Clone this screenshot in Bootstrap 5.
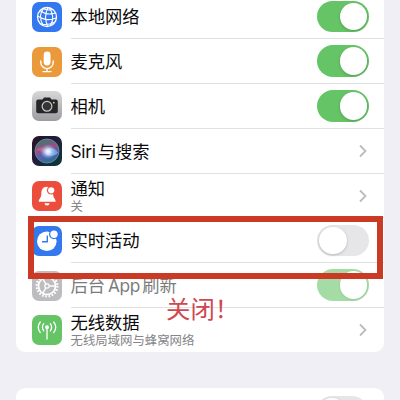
<!DOCTYPE html>
<html lang="zh-CN">
<head>
<meta charset="utf-8">
<meta name="viewport" content="width=device-width, initial-scale=1">
<title>设置</title>
<link href="https://cdn.jsdelivr.net/npm/bootstrap@5.3.0/dist/css/bootstrap.min.css" rel="stylesheet">
<style>
html, body { height: 400px; overflow: hidden; }
body { background: #f0eff5; font-family: Inter, "Noto Sans CJK SC", sans-serif; color: #0a0a0a; }
.screen { height: 400px; padding: 0 16px; }
.settings { border-radius: 9px; background: #fff; }
.settings-top { margin-top: -6px; }
.settings-next { margin-top: 36px; height: 60px; }
.item { height: 44.8px; padding: 1px 0 0 16px; background: none; border: 0; }
.tile { width: 30px; height: 30px; flex: none; margin-right: 8.5px; }
.body-line { height: 44.8px; border-bottom: 1px solid #e1e1e4; padding-right: 15px; }
.item:last-child .body-line { border-color: transparent; }
.title { font-size: 17.3px; line-height: 20px; white-space: nowrap; padding-top: 2px; }
.note { font-size: 12.4px; line-height: 14px; color: #858588; margin-top: 1px; }
.latin { letter-spacing: -.3px; margin-right: 2.2px; }
.latin-mid { margin-left: 2.8px; }
.switch { width: 52px; height: 31.5px; border-radius: 16px; background: #65c466; padding: 2px; box-sizing: border-box; }
.knob { width: 27.5px; height: 27.5px; border-radius: 50%; background: #fff; box-shadow: 0 1px 3px rgba(0,0,0,.2); }
.switch.off { background: #e6e6e8; }
.faded .tile, .faded .switch { opacity: .58; }
.faded .title { color: #7c7c7c; }
.chev { width: 10px; height: 16px; margin-right: 1.5px; }
.frame { left: 28px; top: 215.5px; width: 355px; height: 63.5px; border: 6px solid #cb3a25; }
.callout-text { left: 166px; top: 291px; font-size: 24.4px; line-height: 36px; color: #cf4850; white-space: nowrap; }
</style>
<script src="https://cdn.jsdelivr.net/npm/bootstrap@5.3.0/dist/js/bootstrap.bundle.min.js"></script>
</head>
<body>
<main class="screen position-relative overflow-hidden">
<div class="list-group settings settings-top">
  <div class="item d-flex align-items-center">
    <svg class="tile" viewBox="0 0 30 30"><rect width="30" height="30" rx="7" fill="#3478f0"/><g fill="none" stroke="#fff" stroke-width="1.1"><circle cx="15" cy="15" r="9.5" stroke-width="1.3"/><path d="M8 8.5Q15 14 23.5 11M5.7 14Q14 20 24.3 16M8 21.5Q15 24 22 20.5M12 6Q5 14 11.5 23.5M16 5.5Q11 15 16 24.5M17 5.5Q24 15 18 24M11 6.5Q16 9 20.5 7.5"/></g></svg>
    <div class="body-line flex-grow-1 d-flex justify-content-between align-items-center"><div class="title">本地网络</div><div class="switch d-flex justify-content-end"><div class="knob"></div></div></div>
  </div>
  <div class="item d-flex align-items-center">
    <svg class="tile" viewBox="0 0 30 30"><rect width="30" height="30" rx="7" fill="#ea9a3a"/><rect x="11.7" y="4.5" width="6.8" height="14" rx="3.4" fill="#fff"/><path d="M8.8 14v1.4a6.2 6.2 0 0 0 12.4 0V14M15 21.5v3M11 24.6h8" fill="none" stroke="#fff" stroke-width="1.4" stroke-linecap="round"/></svg>
    <div class="body-line flex-grow-1 d-flex justify-content-between align-items-center"><div class="title">麦克风</div><div class="switch d-flex justify-content-end"><div class="knob"></div></div></div>
  </div>
  <div class="item d-flex align-items-center">
    <svg class="tile" viewBox="0 0 30 30"><defs><linearGradient id="silver" x2="0" y2="1"><stop stop-color="#d8d8da"/><stop offset="1" stop-color="#9c9ca0"/></linearGradient></defs><rect width="30" height="30" rx="7" fill="url(#silver)"/><path d="M6.2 8.5h4.3l1.5-2.1h6l1.5 2.1h4.3q2 0 2 2v9.800q0 2-2 2H6.200q-2 0-2-2V10.500q0-2 2-2z" fill="#262628"/><circle cx="15" cy="15.300" r="4.900" fill="#343436" stroke="#c9c9cb" stroke-width="1.2"/><circle cx="21.800" cy="11.700" r=".9" fill="#e6cf4f"/></svg>
    <div class="body-line flex-grow-1 d-flex justify-content-between align-items-center"><div class="title">相机</div><div class="switch d-flex justify-content-end"><div class="knob"></div></div></div>
  </div>
  <div class="item d-flex align-items-center">
    <svg class="tile" viewBox="0 0 30 30"><defs><linearGradient id="siri-bg" y2="1"><stop stop-color="#2b1024"/><stop offset=".5" stop-color="#201f3d"/><stop offset="1" stop-color="#0d3a3c"/></linearGradient><linearGradient id="orb" x1=".3" y1="0" x2=".6" y2="1"><stop stop-color="#2a8074"/><stop offset=".4" stop-color="#9c4c7c"/><stop offset=".65" stop-color="#5a60ae"/><stop offset="1" stop-color="#2a6f92"/></linearGradient><radialGradient id="glow"><stop stop-color="#fff"/><stop offset=".35" stop-color="#d8e9ff" stop-opacity=".85"/><stop offset="1" stop-color="#72b6ff" stop-opacity="0"/></radialGradient></defs><rect width="30" height="30" rx="7" fill="url(#siri-bg)"/><circle cx="15" cy="15" r="12" fill="url(#orb)" stroke="#5f9b9d" stroke-width=".8"/><path d="M4 15Q8 8 15 14T26 16Q21 23 14 18T4 15" fill="#da668f" opacity=".55"/><path d="M15 13Q22 10 26 17Q22 21 14 19z" fill="#6fb5f4" opacity=".8"/><ellipse cx="16" cy="15.500" rx="8" ry="7.500" fill="url(#glow)"/></svg>
    <div class="body-line flex-grow-1 d-flex justify-content-between align-items-center"><div class="title"><span class="latin">Siri</span>与搜索</div><svg class="chev" viewBox="0 0 10 16"><path d="M2 2.500 7.500 8 2 13.500" fill="none" stroke="#bcbcc0" stroke-width="1.800"/></svg></div>
  </div>
  <div class="item d-flex align-items-center">
    <svg class="tile" viewBox="0 0 30 30"><rect width="30" height="30" rx="7" fill="#eb4e3d"/><path d="M15 5.800c-4.500 0-5.700 3.500-5.700 7.500 0 3.500-2.600 4.800-2.600 7.400h17c0-2.500-2.600-4-2.600-7.400 0-4-1.500-7.500-6.100-7.500zM12.500 22.200h5a2.500 2.300 0 0 1-5 0z" fill="#fff"/><circle cx="19.200" cy="9.300" r="4.300" fill="#eb4e3d"/><circle cx="19.200" cy="9.300" r="3.100" fill="#fff"/></svg>
    <div class="body-line flex-grow-1 d-flex justify-content-between align-items-center"><div><div class="title">通知</div><div class="note">关</div></div><svg class="chev" viewBox="0 0 10 16"><path d="M2 2.500 7.500 8 2 13.500" fill="none" stroke="#bcbcc0" stroke-width="1.800"/></svg></div>
  </div>
  <div class="item d-flex align-items-center">
    <svg class="tile" viewBox="0 0 30 30"><rect width="30" height="30" rx="7" fill="#3478f0"/><circle cx="14.800" cy="15.300" r="9.800" fill="#fff"/><path d="M15.300 9.500v6.300H10" fill="none" stroke="#3478f0" stroke-width="1.400"/><circle cx="22" cy="8.300" r="5" fill="#3478f0"/><circle cx="22" cy="8.300" r="3.700" fill="#fff"/></svg>
    <div class="body-line flex-grow-1 d-flex justify-content-between align-items-center"><div class="title">实时活动</div><div class="switch off d-flex"><div class="knob"></div></div></div>
  </div>
  <div class="item faded d-flex align-items-center">
    <svg class="tile" viewBox="0 0 30 30"><rect width="30" height="30" rx="7" fill="#8e8e93"/><g fill="none" stroke="#fff"><circle cx="15" cy="15" r="10.400" stroke-width="2.200" stroke-dasharray="1.700 1.567"/><circle cx="15" cy="15" r="8.500" stroke-width="1.700"/><circle cx="15" cy="15" r="2.200" stroke-width="1.200"/><path d="M17.200 15h6.200M13.900 13.100l-3.200-5.500M13.900 16.900l-3.200 5.500" stroke-width="1.400"/></g></svg>
    <div class="body-line flex-grow-1 d-flex justify-content-between align-items-center"><div class="title">后台<span class="latin latin-mid">App</span>刷新</div><div class="switch d-flex justify-content-end"><div class="knob"></div></div></div>
  </div>
  <div class="item d-flex align-items-center">
    <svg class="tile" viewBox="0 0 30 30"><rect width="30" height="30" rx="7" fill="#65c466"/><circle cx="15" cy="12.300" r="2" fill="#fff"/><path d="M15 12v12M11.700 8.700q-2.600 3.600 0 7.200M18.300 8.700q2.600 3.600 0 7.200M8.300 7q-4.200 5.300 0 10.600M21.700 7q4.200 5.300 0 10.600" fill="none" stroke="#fff" stroke-width="1.300" stroke-linecap="round"/></svg>
    <div class="body-line flex-grow-1 d-flex justify-content-between align-items-center"><div><div class="title">无线数据</div><div class="note">无线局域网与蜂窝网络</div></div><svg class="chev" viewBox="0 0 10 16"><path d="M2 2.500 7.500 8 2 13.500" fill="none" stroke="#bcbcc0" stroke-width="1.800"/></svg></div>
  </div>
</div>
<div class="settings settings-next d-flex justify-content-end align-items-start pe-3 pt-2"><div class="switch off d-flex"><div class="knob"></div></div></div>
<div class="frame position-absolute"></div>
<div class="callout-text position-absolute">关闭！</div>
</main>
</body>
</html>
